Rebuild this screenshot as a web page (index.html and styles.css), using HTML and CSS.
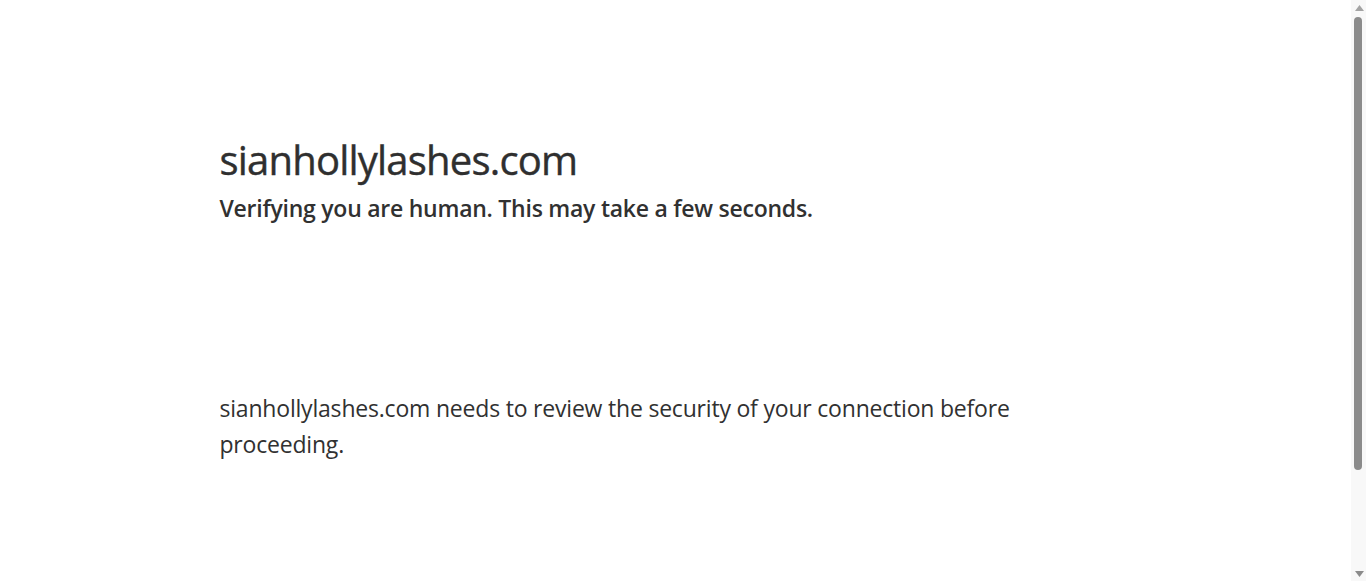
FILE: index.html
```html
<!DOCTYPE html>
<html lang="en">
<head>
<meta charset="utf-8">
<title>Just a moment...</title>
<link rel="stylesheet" href="styles.css">
</head>
<body>
<div class="window">
  <div class="viewport">
    <div class="main-content">
      <h1 class="zone-name-title">sianhollylashes.com</h1>
      <h2 class="core-msg">Verifying you are human. This may take a few seconds.</h2>
      <div class="challenge-area"></div>
      <div class="body-text">sianhollylashes.com needs to review the security of your connection before proceeding.</div>
    </div>
  </div>
  <div class="scrollbar" aria-hidden="true">
    <div class="sb-button">
      <svg width="9" height="6" viewBox="0 0 9 6"><polygon points="4.5,0 9,6 0,6" fill="#a3a3a3"/></svg>
    </div>
    <div class="sb-track">
      <div class="sb-thumb"></div>
    </div>
    <div class="sb-button sb-down">
      <svg width="9" height="6" viewBox="0 0 9 6"><polygon points="0,0 9,0 4.5,6" fill="#8b8b8b"/></svg>
    </div>
  </div>
</div>
</body>
</html>
```
FILE: styles.css
```css
html, body {
  margin: 0;
  padding: 0;
  height: 100%;
  overflow: hidden;
}
body {
  background: #ffffff;
  color: #313131;
  font-family: "Open Sans", "Noto Sans", "DejaVu Sans", sans-serif;
}
.window {
  display: flex;
  height: 100%;
}
.viewport {
  flex: 1;
  min-width: 0;
  overflow: hidden;
}
.main-content {
  box-sizing: border-box;
  width: 100%;
  max-width: 960px;
  margin: 130px auto 0;
  padding: 0 24px;
}
.zone-name-title {
  margin: 0;
  font-size: 40px;
  font-weight: 500;
  line-height: 60px;
  letter-spacing: -0.8px;
  color: #2f2f2f;
  -webkit-text-stroke: 0.4px #2f2f2f;
}
.core-msg {
  margin: 0;
  font-size: 23px;
  font-weight: 600;
  line-height: 36px;
  letter-spacing: -0.25px;
}
.challenge-area {
  height: 164px;
}
.body-text {
  font-size: 23px;
  font-weight: 400;
  line-height: 36px;
  letter-spacing: -0.2px;
}
.scrollbar {
  width: 15px;
  flex: none;
  background: #f8f8f8;
  display: flex;
  flex-direction: column;
}
.sb-button {
  height: 15px;
  display: flex;
  align-items: center;
  justify-content: center;
  flex: none;
}
.sb-button svg {
  display: block;
  margin-left: 1px;
}
.sb-track {
  flex: 1;
  padding: 2px 4px 96px 3px;
  display: flex;
  flex-direction: column;
}
.sb-thumb {
  flex: 1;
  background: #8b8b8b;
  border-radius: 4px;
}
```
